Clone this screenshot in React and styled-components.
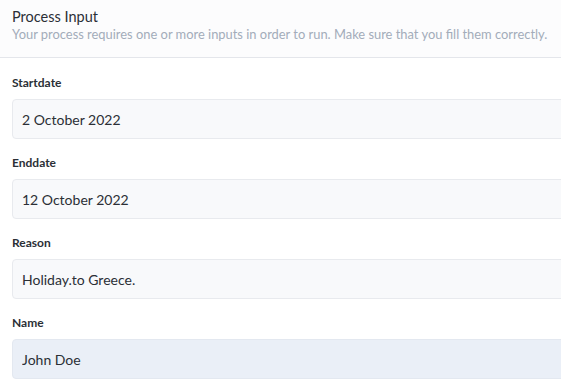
import React from "react";
import styled, { createGlobalStyle } from "styled-components";

const Global = createGlobalStyle`
  html, body { margin: 0; padding: 0; background: #ffffff; overflow: hidden; }
  body { font-family: Lato, "Noto Sans", sans-serif; }
`;

const Page = styled.div`
  width: 561px;
  height: 386px;
  overflow: hidden;
`;

const Header = styled.header`
  padding: 8px 12px 15px;
  background: #fcfcfd;
  border-bottom: 1px solid #e4e6eb;
`;

const Title = styled.h1`
  margin: 0;
  font-size: 14.5px;
  line-height: 18px;
  font-weight: 400;
  color: #2b2f36;
`;

const Subtitle = styled.p`
  margin: 0;
  font-size: 12.9px;
  line-height: 16px;
  color: #a3acba;
  white-space: nowrap;
`;

const Form = styled.form`
  display: flex;
  flex-direction: column;
  gap: 16px;
  padding: 17px 0 0 12px;
`;

const Field = styled.div`
  display: flex;
  flex-direction: column;
  gap: 8px;
`;

const Label = styled.label`
  font-size: 12px;
  line-height: 16px;
  font-weight: 700;
  color: #2b2f36;
`;

const Input = styled.input`
  box-sizing: border-box;
  width: 600px;
  height: 40px;
  padding: 0 9px;
  border: 1px solid ${(p) => (p.$active ? "#e3e8f0" : "#e8eaee")};
  border-radius: 4px;
  background: ${(p) => (p.$active ? "#eaeff7" : "#f8f9fb")};
  font-family: Lato, "Noto Sans", sans-serif;
  font-size: 14px;
  color: #2b2f36;
  outline: none;
`;

const fields = [
  { label: "Startdate", value: "2 October 2022" },
  { label: "Enddate", value: "12 October 2022" },
  { label: "Reason", value: "Holiday.to Greece." },
  { label: "Name", value: "John Doe", active: true },
];

export default function App() {
  return (
    <Page>
      <Global />
      <Header>
        <Title>Process Input</Title>
        <Subtitle>
          Your process requires one or more inputs in order to run. Make sure that you fill them correctly.
        </Subtitle>
      </Header>
      <Form onSubmit={(e) => e.preventDefault()}>
        {fields.map((f) => (
          <Field key={f.label}>
            <Label>{f.label}</Label>
            <Input readOnly value={f.value} $active={f.active} />
          </Field>
        ))}
      </Form>
    </Page>
  );
}
